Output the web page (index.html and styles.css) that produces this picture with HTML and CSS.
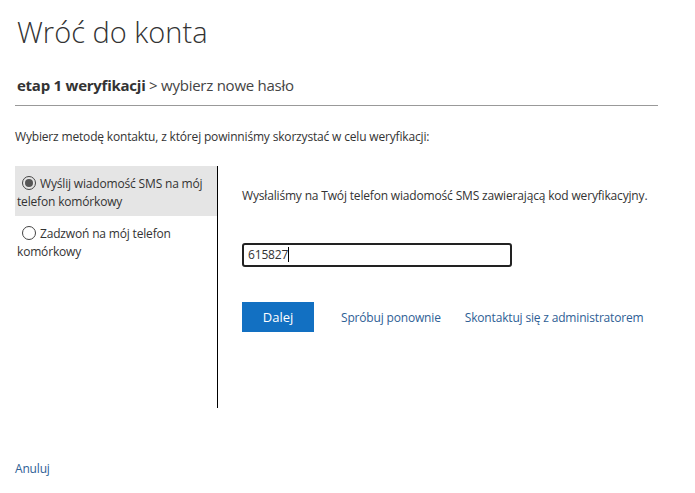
FILE: index.html
```html
<!DOCTYPE html>
<html lang="pl">
<head>
  <meta charset="utf-8">
  <title>Wróć do konta</title>
  <link rel="stylesheet" href="styles.css">
</head>
<body>
  <div class="page">
    <h1 class="title">Wróć do konta</h1>

    <div class="steps">
      <b>etap 1 weryfikacji</b> &gt; wybierz nowe hasło
    </div>

    <p class="intro">Wybierz metodę kontaktu, z której powinniśmy skorzystać w celu weryfikacji:</p>

    <div class="verify">
      <ul class="methods">
        <li class="method selected"><span class="radio"></span>Wyślij wiadomość SMS na mój telefon komórkowy</li>
        <li class="method"><span class="radio"></span>Zadzwoń na mój telefon komórkowy</li>
      </ul>

      <div class="detail">
        <p class="sent">Wysłaliśmy na Twój telefon wiadomość SMS zawierającą kod weryfikacyjny.</p>
        <div class="code">615827<span class="caret"></span></div>
        <div class="actions">
          <button class="next">Dalej</button>
          <a href="#" class="link">Spróbuj ponownie</a>
          <a href="#" class="link">Skontaktuj się z administratorem</a>
        </div>
      </div>
    </div>

    <a href="#" class="link cancel">Anuluj</a>
  </div>
</body>
</html>
```

FILE: styles.css
```css
body {
  margin: 0;
  background: #fff;
  font-family: "Open Sans", "Noto Sans", sans-serif;
  color: #333;
  letter-spacing: -0.17px;
}

.page {padding: 0 0 0 15px;}

.title {
  margin: 12px 0 0 2px;
  font-size: 29px; font-weight: 300;
  line-height: 40px;
  color: #333;
  letter-spacing: 0;
}

.steps {
  width: 641px;
  margin-top: 23px;
  padding: 0 0 10px 2px;
  border-bottom: 1px solid #999;
  font-size: 15px; color: #444;
  letter-spacing: -0.25px;
}
.steps b {color: #333;}

.intro {
  margin: 22px 0 0;
  font-size: 12px; line-height: 18px;
}

.verify {
  display: flex;
  margin-top: 20px;
}

.methods {
  list-style: none;
  margin: 0; padding: 0;
  width: 202px; height: 242px;
  border-right: 1px solid #000;
}
.method {
  padding: 9px 6px 5px 2px;
  font-size: 12px; line-height: 18px;
}
.method.selected {background: #e5e5e5;}

.radio {
  display: inline-block;
  width: 12px; height: 12px;
  margin: 0 4px 0 5px;
  border: 1px solid #444; border-radius: 50%;
  vertical-align: -2px;
  position: relative;
}
.selected .radio:after {
  content: "";
  position: absolute; top: 2px; left: 2px;
  width: 8px; height: 8px;
  border-radius: 50%;
  background: #555;
}

.detail {padding-left: 24px;}

.sent {
  margin: 21px 0 0;
  font-size: 12px; line-height: 18px;
}

.code {
  width: 258px; height: 20px;
  margin-top: 38px;
  padding: 0 4px;
  border: 2px solid #222; border-radius: 3px;
  font-size: 12px; line-height: 20px;
}
.caret {
  display: inline-block;
  width: 1px; height: 15px;
  background: #000;
  vertical-align: -3px;
}

.actions {
  display: flex; align-items: center;
  margin-top: 35px;
}
.next {
  width: 72px; height: 30px;
  margin-right: 27px;
  border: 0; padding: 0;
  background: #1270c2; color: #fff;
  font-family: inherit; font-size: 13px;
}
.link {
  color: #2e6095;
  font-size: 12px;
  text-decoration: none;
}
.actions .link {margin-right: 24px;}

.cancel {
  display: inline-block;
  margin-top: 52px;
}
```
